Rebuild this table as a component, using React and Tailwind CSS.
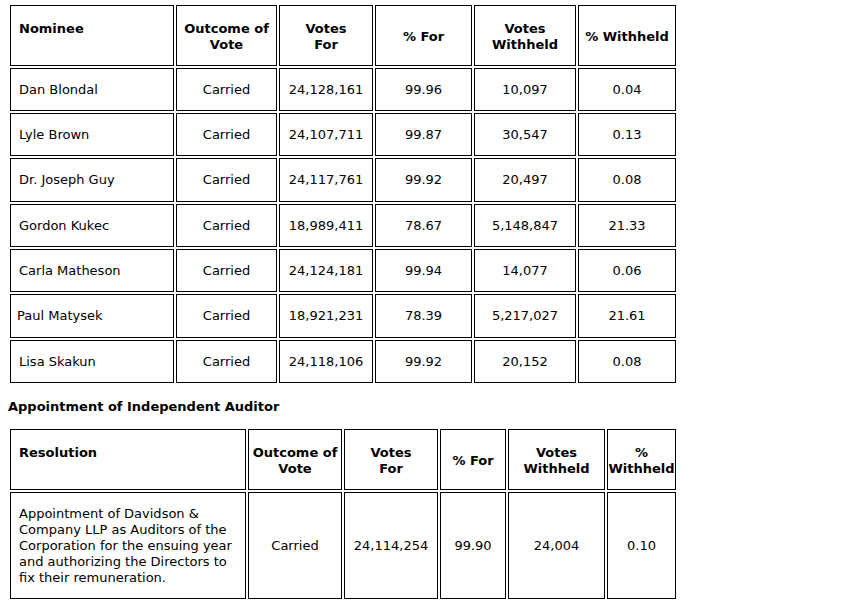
const nominees = [
  ["Dan Blondal", "24,128,161", "99.96", "10,097", "0.04"],
  ["Lyle Brown", "24,107,711", "99.87", "30,547", "0.13"],
  ["Dr. Joseph Guy", "24,117,761", "99.92", "20,497", "0.08"],
  ["Gordon Kukec", "18,989,411", "78.67", "5,148,847", "21.33"],
  ["Carla Matheson", "24,124,181", "99.94", "14,077", "0.06"],
  ["Paul Matysek", "18,921,231", "78.39", "5,217,027", "21.61"],
  ["Lisa Skakun", "24,118,106", "99.92", "20,152", "0.08"],
];

const cell = "border border-black align-middle";
const head = `${cell} font-bold text-center px-0 pt-[2px]`;

export default function App() {
  return (
    <div
      className="min-h-screen bg-white pl-2 text-[13px] leading-4 text-black"
      style={{ fontFamily: '"DejaVu Sans", Verdana, sans-serif' }}
    >
      <table className="mt-[3px] border-separate border-spacing-[2px] table-fixed">
        <colgroup>
          <col className="w-[164px]" />
          <col className="w-[101px]" />
          <col className="w-[94px]" />
          <col className="w-[97px]" />
          <col className="w-[102px]" />
          <col className="w-[98px]" />
        </colgroup>
        <thead>
          <tr className="h-[61px]">
            <th className={`${cell} font-bold text-left align-top pl-2 pt-[15px]`}>Nominee</th>
            <th className={head}>Outcome of<br />Vote</th>
            <th className={head}>Votes<br />For</th>
            <th className={head}>% For</th>
            <th className={head}>Votes<br />Withheld</th>
            <th className={head}>% Withheld</th>
          </tr>
        </thead>
        <tbody>
          {nominees.map((n, i) => (
            <tr key={n[0]} className={i % 3 === 2 ? "h-[44px]" : "h-[43px]"}>
              <td className={`${cell} ${n[0] === "Paul Matysek" ? "pl-[6px]" : "pl-2"}`}>{n[0]}</td>
              <td className={`${cell} text-center`}>Carried</td>
              <td className={`${cell} text-center`}>{n[1]}</td>
              <td className={`${cell} text-center`}>{n[2]}</td>
              <td className={`${cell} text-center`}>{n[3]}</td>
              <td className={`${cell} text-center`}>{n[4]}</td>
            </tr>
          ))}
        </tbody>
      </table>

      <h3 className="mt-[14px] font-bold">Appointment of Independent Auditor</h3>

      <table className="mt-[12px] border-separate border-spacing-[2px] table-fixed">
        <colgroup>
          <col className="w-[236px]" />
          <col className="w-[94px]" />
          <col className="w-[94px]" />
          <col className="w-[66px]" />
          <col className="w-[97px]" />
          <col className="w-[69px]" />
        </colgroup>
        <thead>
          <tr className="h-[61px]">
            <th className={`${cell} font-bold text-left align-top pl-2 pt-[15px]`}>Resolution</th>
            <th className={head}>Outcome of<br />Vote</th>
            <th className={head}>Votes<br />For</th>
            <th className={head}>% For</th>
            <th className={head}>Votes<br />Withheld</th>
            <th className={head}>%<br />Withheld</th>
          </tr>
        </thead>
        <tbody>
          <tr className="h-[107px]">
            <td className={`${cell} pl-2 pr-2`}>
              Appointment of Davidson &amp; Company LLP as Auditors of the
              Corporation for the ensuing year and authorizing the Directors to
              fix their remuneration.
            </td>
            <td className={`${cell} text-center`}>Carried</td>
            <td className={`${cell} text-center`}>24,114,254</td>
            <td className={`${cell} text-center`}>99.90</td>
            <td className={`${cell} text-center`}>24,004</td>
            <td className={`${cell} text-center`}>0.10</td>
          </tr>
        </tbody>
      </table>
    </div>
  );
}
